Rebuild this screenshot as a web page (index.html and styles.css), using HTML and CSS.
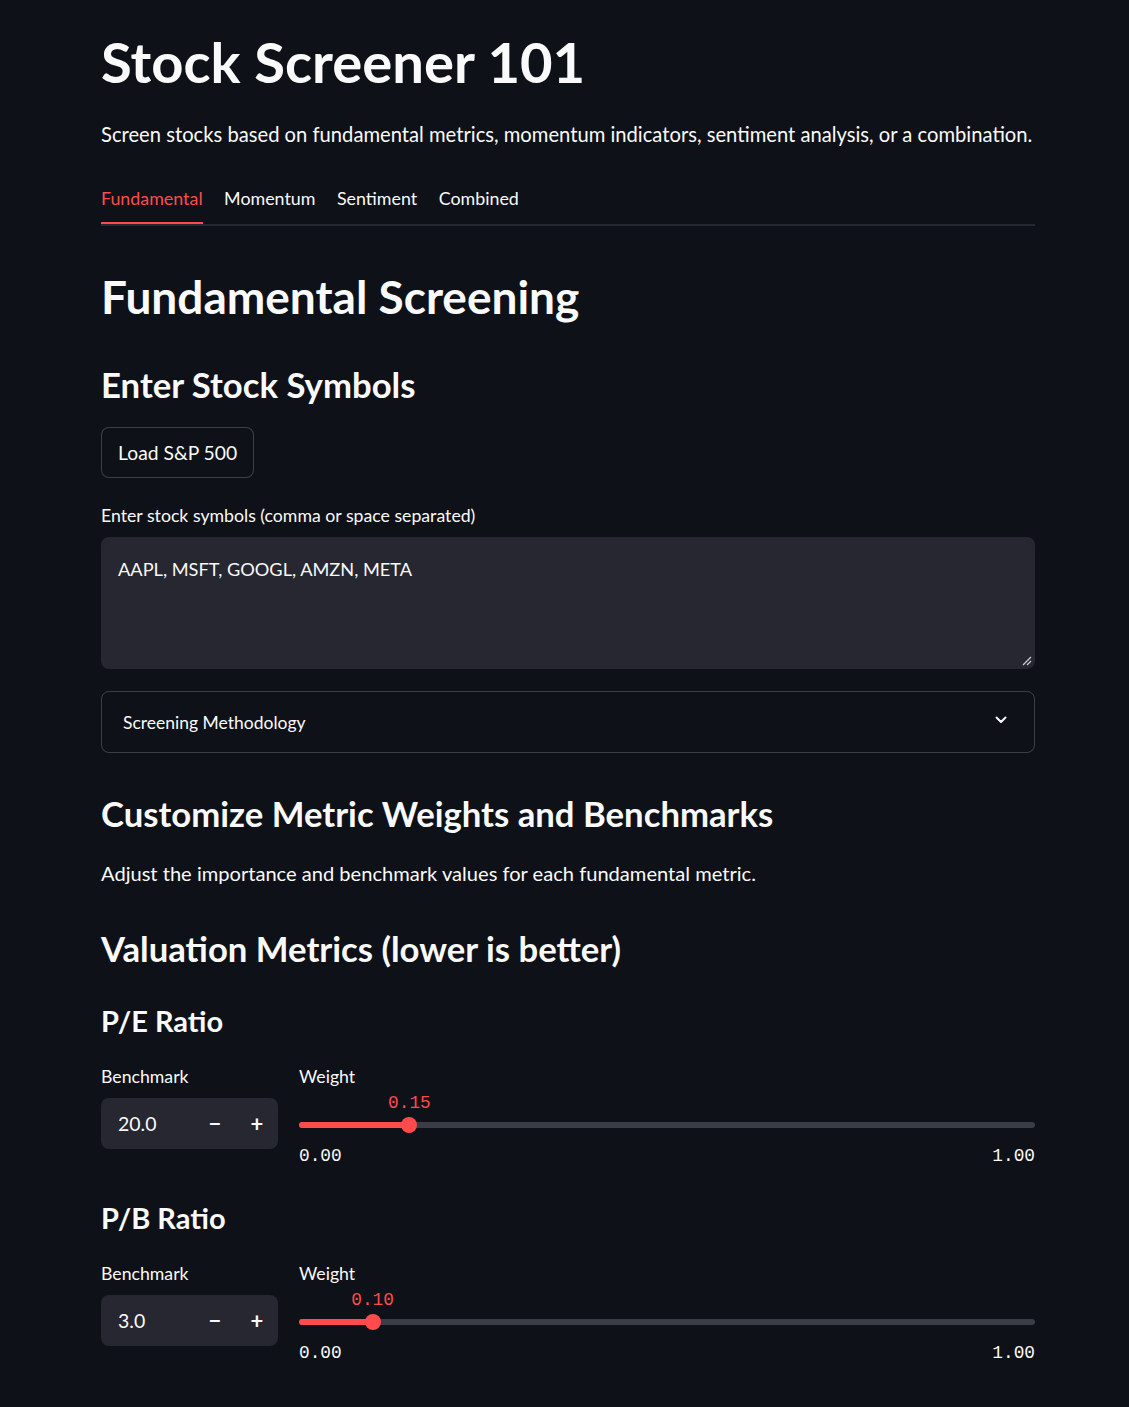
FILE: index.html
```html
<!DOCTYPE html>
<html lang="en">
<head>
<meta charset="utf-8">
<title>Stock Screener 101</title>
<link rel="stylesheet" href="styles.css">
</head>
<body>
<main class="page">
  <h1 class="title">Stock Screener 101</h1>
  <p class="lead">Screen stocks based on fundamental metrics, momentum indicators, sentiment analysis, or a combination.</p>
  <nav class="tabs">
    <span class="tab active">Fundamental</span>
    <span class="tab">Momentum</span>
    <span class="tab">Sentiment</span>
    <span class="tab">Combined</span>
  </nav>
  <h2 class="h2">Fundamental Screening</h2>
  <h3 class="h3 h3-first">Enter Stock Symbols</h3>
  <button class="btn">Load S&amp;P 500</button>
  <div class="label label-ta">Enter stock symbols (comma or space separated)</div>
  <div class="textarea">AAPL, MSFT, GOOGL, AMZN, META
    <svg class="grip" width="10" height="10" viewBox="0 0 10 10"><path d="M1 9 L9 1 M5 9 L9 5" stroke="#c8c8cc" stroke-width="1.3" fill="none"/></svg>
  </div>
  <div class="expander">
    <span>Screening Methodology</span>
    <svg class="chev" width="14" height="14" viewBox="0 0 14 14"><path d="M2.5 4.5 L7 9 L11.5 4.5" stroke="#fafafa" stroke-width="2" fill="none" stroke-linecap="round" stroke-linejoin="round"/></svg>
  </div>
  <h3 class="h3 h3-custom">Customize Metric Weights and Benchmarks</h3>
  <p class="para">Adjust the importance and benchmark values for each fundamental metric.</p>
  <h3 class="h3 h3-val">Valuation Metrics (lower is better)</h3>

  <h4 class="h4">P/E Ratio</h4>
  <div class="metric-row">
    <div class="bench">
      <div class="label">Benchmark</div>
      <div class="numinput"><span class="num">20.0</span><span class="step">&minus;</span><span class="step">+</span></div>
    </div>
    <div class="weight">
      <div class="label">Weight</div>
      <div class="slider">
        <div class="val-row"><span class="val" style="left:15%">0.15</span></div>
        <div class="track"><div class="fill" style="width:15%"></div><div class="thumb" style="left:15%"></div></div>
        <div class="ticks"><span>0.00</span><span>1.00</span></div>
      </div>
    </div>
  </div>

  <h4 class="h4 h4-next">P/B Ratio</h4>
  <div class="metric-row">
    <div class="bench">
      <div class="label">Benchmark</div>
      <div class="numinput"><span class="num">3.0</span><span class="step">&minus;</span><span class="step">+</span></div>
    </div>
    <div class="weight">
      <div class="label">Weight</div>
      <div class="slider">
        <div class="val-row"><span class="val" style="left:10%">0.10</span></div>
        <div class="track"><div class="fill" style="width:10%"></div><div class="thumb" style="left:10%"></div></div>
        <div class="ticks"><span>0.00</span><span>1.00</span></div>
      </div>
    </div>
  </div>
</main>
</body>
</html>
```

FILE: styles.css
```css
* { box-sizing: border-box; }
html, body { margin: 0; padding: 0; background: #0e1117; }
body {
  color: #fafafa;
  font-family: "Lato", "Liberation Sans", sans-serif;
  height: 1407px;
  overflow: hidden;
}
.page {
  width: 934px;
  margin-left: 101px;
}
.title {
  margin: 22px 0 0;
  height: 80px;
  line-height: 80px;
  font-size: 56.2px;
  font-weight: 700;
}
.lead {
  margin: 17px 0 0;
  height: 30px;
  line-height: 30px;
  font-size: 20.2px;
}
.tabs {
  margin-top: 25px;
  height: 52px;
  display: flex;
  gap: 21.5px;
  border-bottom: 2px solid #262730;
}
.tab {
  font-size: 17.85px;
  line-height: 48px;
  height: 50px;
}
.tab.active {
  color: #ff4b4b;
  border-bottom: 2px solid #ff4b4b;
}
.h2 {
  margin: 43px 0 0;
  height: 56px;
  line-height: 56px;
  font-size: 46px;
  font-weight: 700;
}
.h3 {
  margin: 0;
  height: 44px;
  line-height: 44px;
  font-size: 34.7px;
  font-weight: 700;
}
.h3-first { margin-top: 38px; }
.h3-custom { margin-top: 39px; }
.h3-val { margin-top: 39px; }
.btn {
  display: block;
  margin-top: 20px;
  height: 51px;
  padding: 0 16px;
  white-space: nowrap;
  background: #0e1117;
  color: #fafafa;
  border: 1px solid rgba(250, 250, 250, 0.2);
  border-radius: 8px;
  font-family: inherit;
  font-size: 19.3px;
}
.label {
  height: 24px;
  line-height: 24px;
  font-size: 17.7px;
}
.label-ta { margin-top: 26px; }
.textarea {
  position: relative;
  margin-top: 9px;
  height: 132px;
  background: #262730;
  border-radius: 8px;
  padding: 18px 17px;
  font-size: 18.2px;
  line-height: 28px;
}
.grip {
  position: absolute;
  right: 3px;
  bottom: 3px;
}
.expander {
  margin-top: 22px;
  height: 62px;
  border: 1px solid rgba(250, 250, 250, 0.2);
  border-radius: 8px;
  display: flex;
  align-items: center;
  justify-content: space-between;
  padding: 0 26px 0 21px;
  font-size: 17.5px;
}
.chev { margin-top: -4px; }
.para {
  margin: 22px 0 0;
  height: 30px;
  line-height: 30px;
  font-size: 20.1px;
}
.h4 {
  margin: 32px 0 0;
  height: 36px;
  line-height: 36px;
  font-size: 29px;
  font-weight: 700;
}
.h4-next { margin-top: 34px; }
.metric-row {
  margin-top: 26px;
  display: flex;
  gap: 21px;
}
.bench { width: 177px; flex: none; }
.weight { flex: 1; }
.numinput {
  margin-top: 9px;
  height: 51px;
  background: #262730;
  border-radius: 8px;
  display: flex;
  align-items: center;
  font-size: 19.5px;
}
.num { flex: 1; padding-left: 17px; }
.step {
  width: 42px;
  text-align: center;
  font-size: 22px;
  font-weight: 700;
}
.slider { position: relative; }
.val-row {
  position: relative;
  height: 20px;
  margin-top: 4px;
}
.val {
  position: absolute;
  top: 0;
  transform: translateX(-50%);
  color: #ff4b4b;
  font-family: "Liberation Mono", "DejaVu Sans Mono", monospace;
  font-size: 17.8px;
  line-height: 20px;
}
.track {
  position: relative;
  margin-top: 9px;
  height: 6px;
  border-radius: 3px;
  background: #3a3d46;
}
.fill {
  height: 6px;
  border-radius: 3px;
  background: #ff4b4b;
}
.thumb {
  position: absolute;
  top: 50%;
  width: 16px;
  height: 16px;
  margin: -8px 0 0 -8px;
  border-radius: 50%;
  background: #ff4b4b;
}
.ticks {
  margin-top: 18px;
  height: 20px;
  display: flex;
  justify-content: space-between;
  font-family: "Liberation Mono", "DejaVu Sans Mono", monospace;
  font-size: 17.8px;
  line-height: 20px;
}
```
